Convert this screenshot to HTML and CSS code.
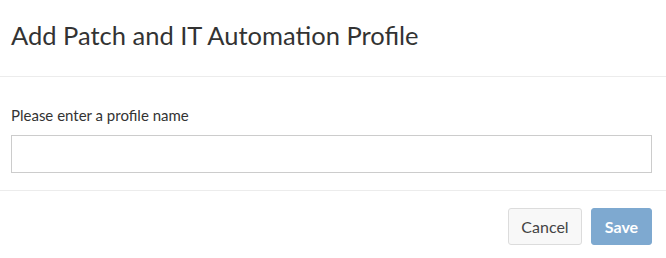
FILE: index.html
```html
<!DOCTYPE html>
<html>
<head>
<meta charset="utf-8">
<link rel="stylesheet" href="styles.css">
</head>
<body>
<div class="modal">
  <div class="modal-header">
    <h4 class="modal-title">Add Patch and IT Automation Profile</h4>
  </div>
  <div class="modal-body">
    <label class="field-label" for="pname">Please enter a profile name</label>
    <input class="field-input" id="pname" type="text">
  </div>
  <div class="modal-footer">
    <button class="btn btn-default">Cancel</button>
    <button class="btn btn-primary" disabled>Save</button>
  </div>
</div>
</body>
</html>
```
FILE: styles.css
```css
html, body {
  margin: 0;
  padding: 0;
  background: #fff;
}
body {
  font-family: Lato, "Noto Sans", sans-serif;
  color: #333;
}
.modal {
  width: 666px;
}
.modal-header {
  padding: 13px 11px 0 11px;
  height: 63px;
  border-bottom: 1px solid #ececec;
}
.modal-title {
  margin: 0;
  font-size: 25.5px;
  font-weight: 400;
  line-height: 44px;
  color: #333;
}
.modal-body {
  padding: 28px 14px 17px 11px;
  border-bottom: 1px solid #ececec;
}
.field-label {
  display: block;
  font-size: 15px;
  line-height: 20px;
  margin-bottom: 10px;
  color: #333;
}
.field-input {
  display: block;
  box-sizing: border-box;
  width: 641px;
  height: 38px;
  margin: 0;
  border: 1px solid #cccccc;
  border-radius: 0;
  padding: 6px 12px;
  font-family: inherit;
  font-size: 14px;
  outline: none;
}
.modal-footer {
  display: flex;
  justify-content: flex-end;
  gap: 9px;
  padding: 17px 14px 0 11px;
}
.btn {
  box-sizing: border-box;
  height: 37px;
  border-radius: 3px;
  font-family: inherit;
  font-size: 16px;
  padding: 0 12px;
}
.btn-default {
  width: 74px;
  background: #f8f8f8;
  border: 1px solid #dcdcdc;
  color: #444;
}
.btn-primary {
  width: 61px;
  background: #7ea9d0;
  border: 1px solid #7ea9d0;
  color: #fff;
  font-weight: 700;
}
```
